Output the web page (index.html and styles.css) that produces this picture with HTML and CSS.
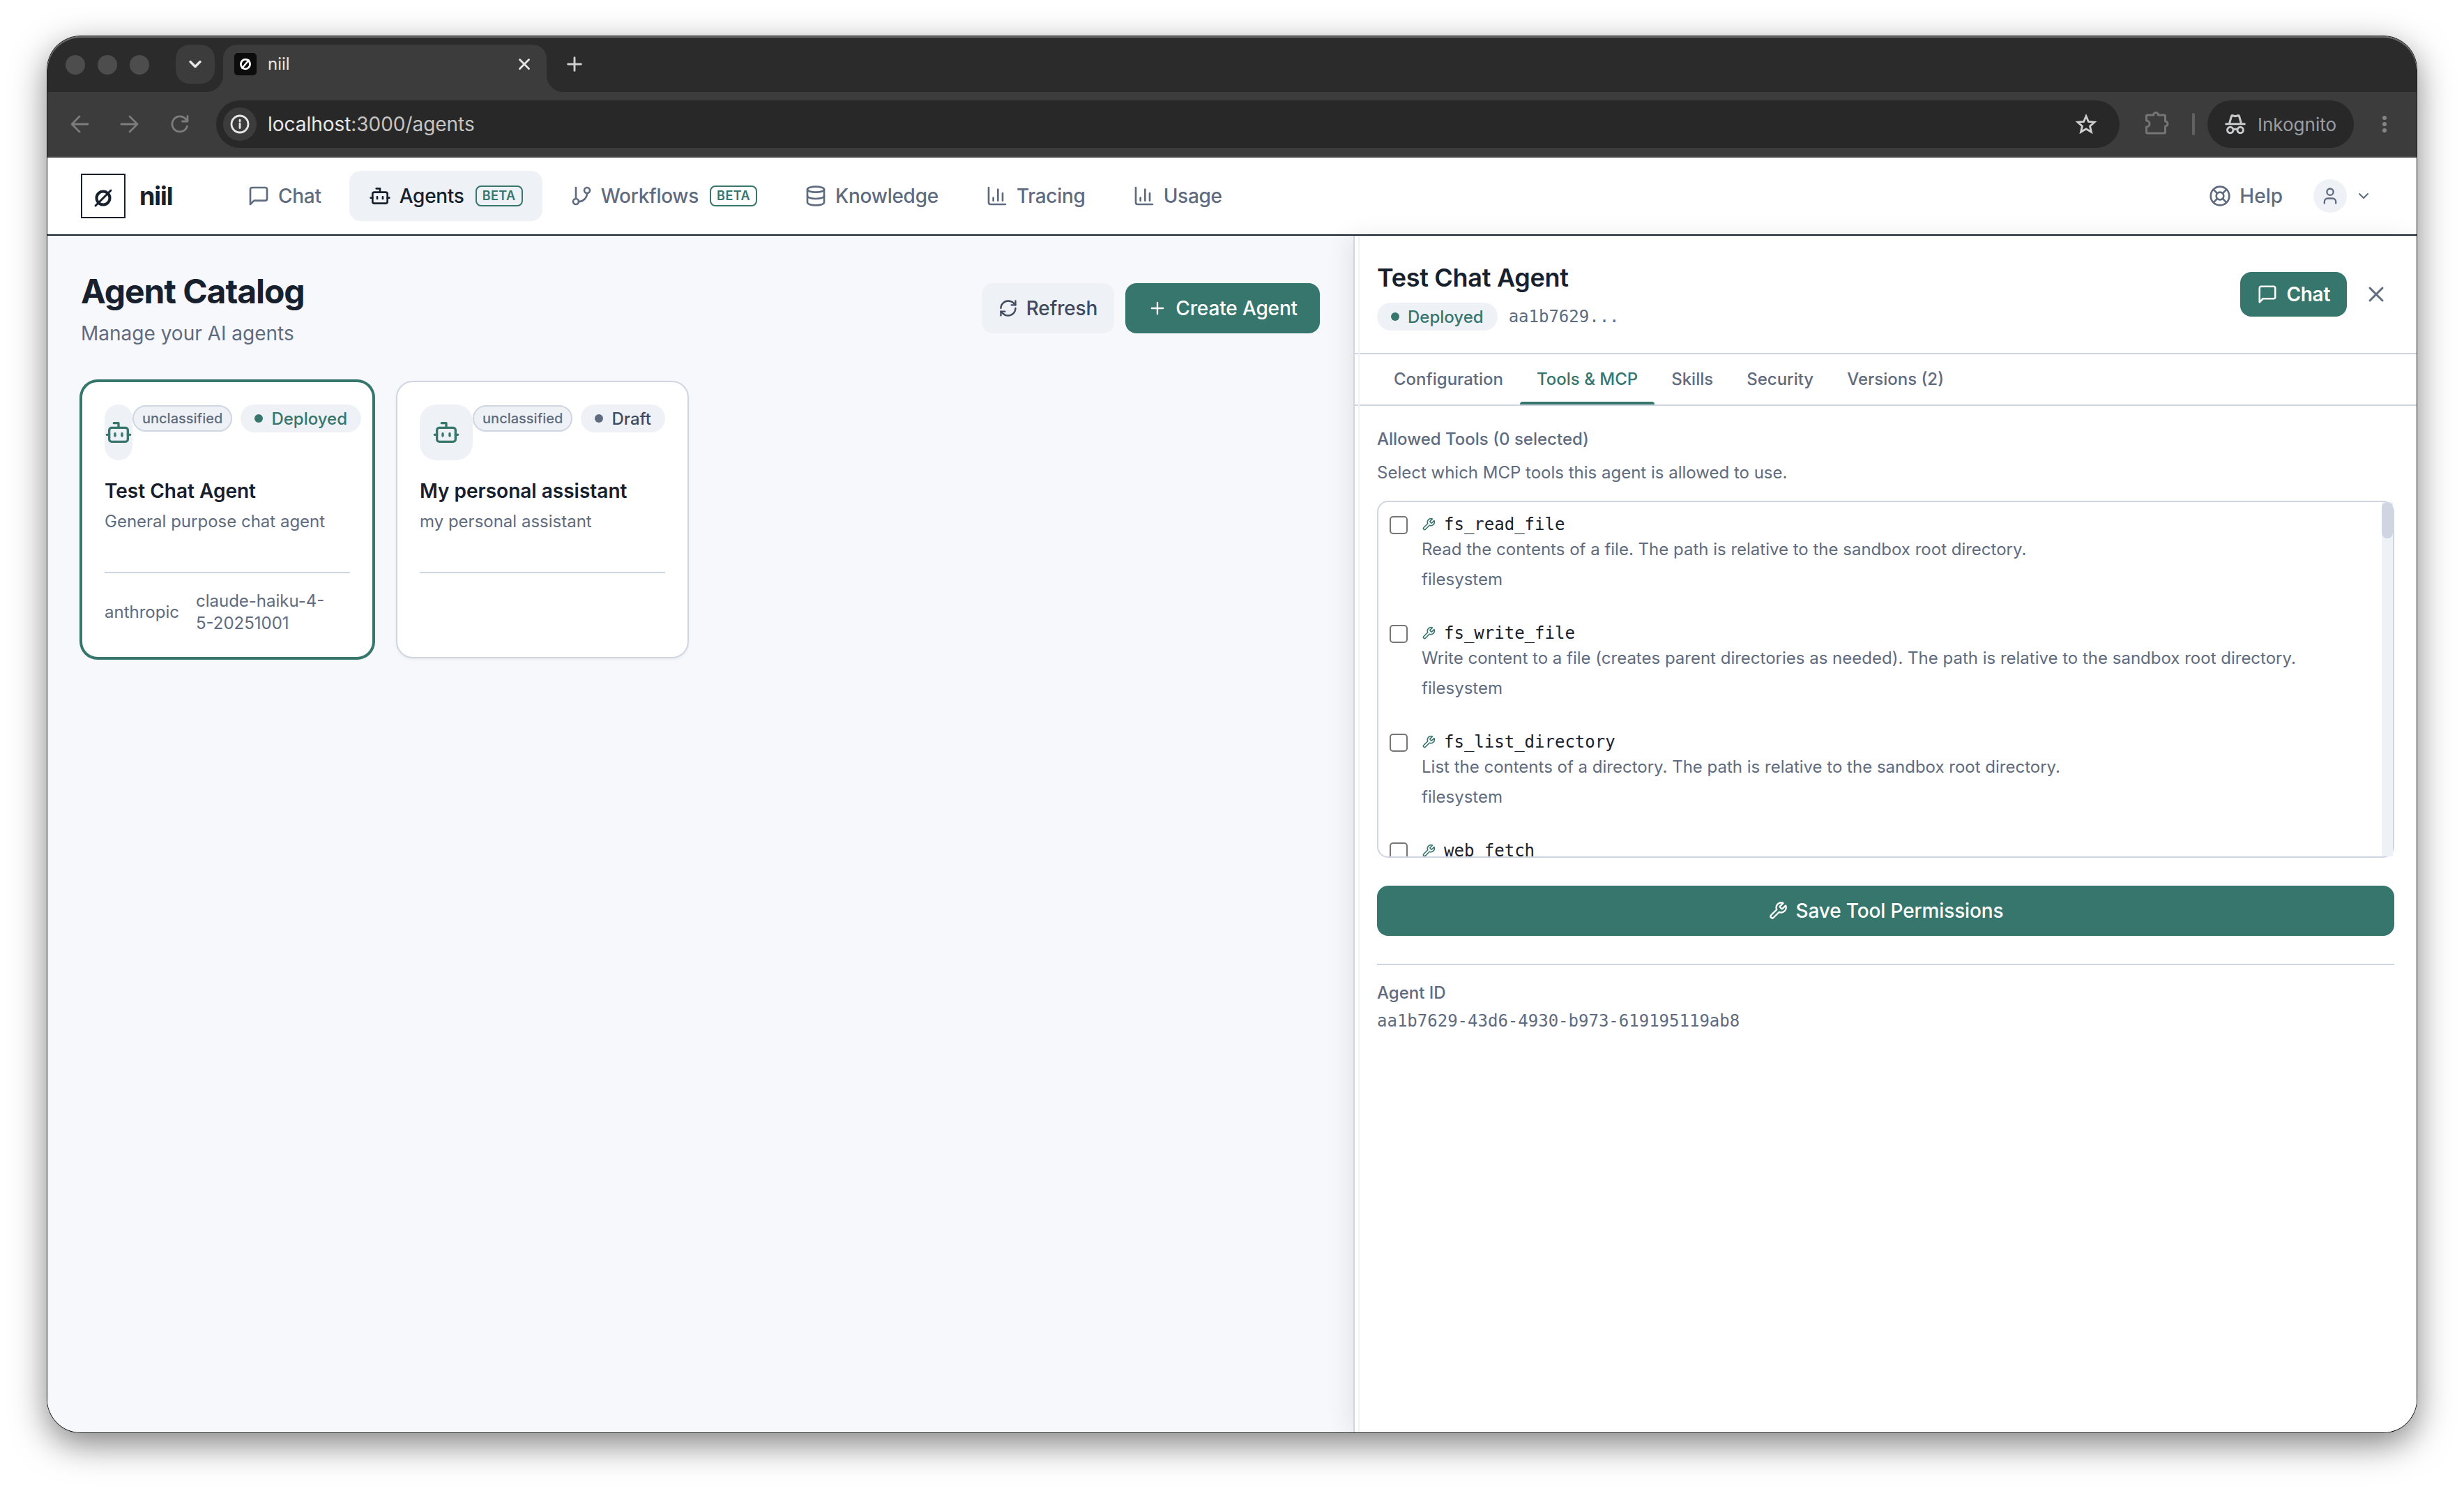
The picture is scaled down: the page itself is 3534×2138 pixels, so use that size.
FILE: index.html
```html
<!DOCTYPE html>
<html lang="en">
<head>
  <meta charset="UTF-8" />
  <meta name="viewport" content="width=device-width, initial-scale=1.0"/>
  <title>niil</title>
  <link rel="stylesheet" href="styles.css">
</head>
<body>
  <!-- shared icons -->
  <svg class="sprite" width="0" height="0">
    <symbol id="i-chat" viewBox="0 0 24 24"><path d="M21 15a2 2 0 0 1-2 2H7l-4 4V5a2 2 0 0 1 2-2h14a2 2 0 0 1 2 2z"/></symbol>
    <symbol id="i-bot" viewBox="0 0 24 24"><path d="M12 8V4H8"/><rect width="16" height="12" x="4" y="8" rx="2"/><path d="M2 14h2M20 14h2M15 13v2M9 13v2"/></symbol>
    <symbol id="i-branch" viewBox="0 0 24 24"><path d="M6 3v12"/><circle cx="18" cy="6" r="3"/><circle cx="6" cy="18" r="3"/><path d="M18 9a9 9 0 0 1-9 9"/></symbol>
    <symbol id="i-db" viewBox="0 0 24 24"><ellipse cx="12" cy="5" rx="9" ry="3"/><path d="M3 5v14a9 3 0 0 0 18 0V5"/><path d="M3 12a9 3 0 0 0 18 0"/></symbol>
    <symbol id="i-chart" viewBox="0 0 24 24"><path d="M3 3v16a2 2 0 0 0 2 2h16M18 17V9M13 17V5M8 17v-3"/></symbol>
    <symbol id="i-help" viewBox="0 0 24 24"><circle cx="12" cy="12" r="10"/><path d="m4.93 4.93 4.24 4.24M14.83 9.17l4.24-4.24M14.83 14.83l4.24 4.24M9.17 14.83l-4.24 4.24"/><circle cx="12" cy="12" r="4"/></symbol>
    <symbol id="i-user" viewBox="0 0 24 24"><path d="M19 21v-2a4 4 0 0 0-4-4H9a4 4 0 0 0-4 4v2"/><circle cx="12" cy="7" r="4"/></symbol>
    <symbol id="i-down" viewBox="0 0 24 24"><path d="m6 9 6 6 6-6"/></symbol>
    <symbol id="i-refresh" viewBox="0 0 24 24"><path d="M3 12a9 9 0 0 1 9-9 9.75 9.75 0 0 1 6.74 2.74L21 8"/><path d="M21 3v5h-5"/><path d="M21 12a9 9 0 0 1-9 9 9.75 9.75 0 0 1-6.74-2.74L3 16"/><path d="M8 16H3v5"/></symbol>
    <symbol id="i-plus" viewBox="0 0 24 24"><path d="M5 12h14M12 5v14"/></symbol>
    <symbol id="i-x" viewBox="0 0 24 24"><path d="M18 6 6 18M6 6l12 12"/></symbol>
    <symbol id="i-wrench" viewBox="0 0 24 24"><path d="M14.7 6.3a1 1 0 0 0 0 1.4l1.6 1.6a1 1 0 0 0 1.4 0l3.77-3.77a6 6 0 0 1-7.94 7.94l-6.91 6.91a2.12 2.12 0 0 1-3-3l6.91-6.91a6 6 0 0 1 7.94-7.94l-3.76 3.76z"/></symbol>
  </svg>

  <div class="window">
    <div class="tabstrip">
      <div class="lights"><i></i><i></i><i></i></div>
      <div class="tab-search"><svg class="icon" width="28" height="28" stroke-width="3"><use href="#i-down"/></svg></div>
      <div class="browser-tab">
        <svg class="favicon" width="32" height="32" viewBox="0 0 32 32"><rect width="32" height="32" rx="5" fill="#0c0c0c"/><ellipse cx="16" cy="16" rx="6.6" ry="6.8" fill="none" stroke="#fff" stroke-width="2.8"/><path d="M10.5 22.5 21.5 9.5" stroke="#fff" stroke-width="2.4"/></svg>
        <span class="tab-title">niil</span>
        <svg class="icon" width="26" height="26" stroke-width="2.6"><use href="#i-x"/></svg>
      </div>
      <svg class="icon new-tab" width="32" height="32" stroke-width="2.2"><use href="#i-plus"/></svg>
    </div>

    <div class="toolbar">
      <svg class="icon nav-ic" width="32" height="32" viewBox="0 0 32 32" stroke-width="2.8"><path d="M28 16H5.5M16 5 5 16l11 11"/></svg>
      <svg class="icon nav-ic" width="32" height="32" viewBox="0 0 32 32" stroke-width="2.8"><path d="M4 16h22.5M16 5l11 11-11 11"/></svg>
      <svg class="icon nav-ic" width="32" height="32" viewBox="0 0 32 32" stroke-width="2.8"><path d="M26.5 19A11 11 0 1 1 24 8.3l3 3M27 4.5v7.5h-7.5"/></svg>
      <div class="omnibox">
        <span class="site-info"><svg class="icon" width="28" height="28" viewBox="0 0 28 28" stroke-width="2.8"><circle cx="14" cy="14" r="12"/><path d="M14 13v6.5M14 8.2v1.6"/></svg></span>
        <span class="url">localhost<span class="url-rest">:3000/agents</span></span>
        <svg class="icon star" width="32" height="32" viewBox="0 0 32 32" stroke-width="2.8"><path stroke-linejoin="miter" d="m16 4.5 3.4 8 8.6.7-6.5 5.7 2 8.4-7.5-4.5-7.5 4.5 2-8.4-6.5-5.7 8.6-.7z"/></svg>
      </div>
      <svg class="icon puzzle" width="36" height="36" viewBox="0 0 36 36" stroke-width="3"><path d="M5 7h8.5a3.5 3.5 0 0 1 7 0H29a1.5 1.5 0 0 1 1.5 1.5V16a3.5 3.5 0 0 1 0 7v8.5A1.5 1.5 0 0 1 29 33H5a1.5 1.5 0 0 1-1.5-1.5V24a4.5 4.5 0 0 0 0-9V8.5A1.5 1.5 0 0 1 5 7z"/></svg>
      <span class="bar-sep"></span>
      <div class="incognito">
        <svg width="32" height="30" viewBox="0 0 32 30" fill="none" stroke="#c9cacc" stroke-width="3"><path d="M1.5 14.8h29"/><path d="M7.5 14 10.5 3.5c.3-.8 1-1 1.7-.8l3.8 1 3.8-1c.7-.2 1.4 0 1.7.8L24.5 14"/><circle cx="8.8" cy="23.5" r="4.2"/><circle cx="23.2" cy="23.5" r="4.2"/><path d="M13 23c2-1.3 4-1.3 6 0"/></svg>
        <span>Inkognito</span>
      </div>
      <div class="kebab"><i></i><i></i><i></i></div>
    </div>

    <header class="app-header">
      <div class="logo"><svg width="32" height="32" viewBox="0 0 32 32" fill="none" stroke="#17202d"><circle cx="16" cy="16" r="9.5" stroke-width="4"/><path d="M5 27 27 5" stroke-width="3" stroke-linecap="round"/></svg></div>
      <div class="brand">niil</div>
      <nav class="main-nav">
        <a class="nav-link"><svg class="icon" width="32" height="32"><use href="#i-chat"/></svg>Chat</a>
        <a class="nav-link active"><svg class="icon" width="32" height="32"><use href="#i-bot"/></svg>Agents<span class="beta">BETA</span></a>
        <a class="nav-link"><svg class="icon" width="32" height="32"><use href="#i-branch"/></svg>Workflows<span class="beta">BETA</span></a>
        <a class="nav-link"><svg class="icon" width="32" height="32"><use href="#i-db"/></svg>Knowledge</a>
        <a class="nav-link"><svg class="icon" width="32" height="32"><use href="#i-chart"/></svg>Tracing</a>
        <a class="nav-link"><svg class="icon" width="32" height="32"><use href="#i-chart"/></svg>Usage</a>
      </nav>
      <a class="help"><svg class="icon" width="32" height="32"><use href="#i-help"/></svg>Help</a>
      <div class="user-menu">
        <span class="avatar"><svg class="icon" width="28" height="28"><use href="#i-user"/></svg></span>
        <svg class="icon" width="24" height="24"><use href="#i-down"/></svg>
      </div>
    </header>

    <div class="workspace">
      <main class="catalog">
        <div class="catalog-head">
          <div>
            <h1>Agent Catalog</h1>
            <p>Manage your AI agents</p>
          </div>
          <div class="actions">
            <button class="btn btn-soft"><svg class="icon" width="28" height="28"><use href="#i-refresh"/></svg>Refresh</button>
            <button class="btn btn-primary"><svg class="icon" width="28" height="28"><use href="#i-plus"/></svg>Create Agent</button>
          </div>
        </div>
        <div class="cards">
          <div class="card selected">
            <div class="card-top">
              <div class="card-icon"><svg class="icon" width="40" height="40"><use href="#i-bot"/></svg></div>
              <div class="badges"><span class="tag">unclassified</span><span class="status deployed">Deployed</span></div>
            </div>
            <h3>Test Chat Agent</h3>
            <p class="card-desc">General purpose chat agent</p>
            <div class="card-foot"><span>anthropic</span><span>claude-haiku-4-<br>5-20251001</span></div>
          </div>
          <div class="card">
            <div class="card-top">
              <div class="card-icon"><svg class="icon" width="40" height="40"><use href="#i-bot"/></svg></div>
              <div class="badges"><span class="tag">unclassified</span><span class="status">Draft</span></div>
            </div>
            <h3>My personal assistant</h3>
            <p class="card-desc">my personal assistant</p>
            <div class="card-foot"></div>
          </div>
        </div>
      </main>

      <aside class="panel">
        <div class="panel-head">
          <div class="panel-title">
            <h2>Test Chat Agent</h2>
            <div class="panel-meta"><span class="status deployed">Deployed</span><code>aa1b7629...</code></div>
          </div>
          <button class="btn btn-primary btn-chat"><svg class="icon" width="30" height="30"><use href="#i-chat"/></svg>Chat</button>
          <button class="close"><svg class="icon" width="36" height="36"><use href="#i-x"/></svg></button>
        </div>
        <div class="panel-tabs">
          <span class="ptab">Configuration</span>
          <span class="ptab active">Tools &amp; MCP</span>
          <span class="ptab">Skills</span>
          <span class="ptab">Security</span>
          <span class="ptab">Versions (2)</span>
        </div>
        <div class="panel-body">
          <div class="label">Allowed Tools (0 selected)</div>
          <p class="hint">Select which MCP tools this agent is allowed to use.</p>
          <div class="tool-box">
            <div class="tool-list">
              <div class="tool">
                <span class="check"></span>
                <div>
                  <div class="tool-name"><svg class="icon" width="20" height="20"><use href="#i-wrench"/></svg>fs_read_file</div>
                  <div class="tool-desc">Read the contents of a file. The path is relative to the sandbox root directory.</div>
                  <div class="tool-src">filesystem</div>
                </div>
              </div>
              <div class="tool">
                <span class="check"></span>
                <div>
                  <div class="tool-name"><svg class="icon" width="20" height="20"><use href="#i-wrench"/></svg>fs_write_file</div>
                  <div class="tool-desc">Write content to a file (creates parent directories as needed). The path is relative to the sandbox root directory.</div>
                  <div class="tool-src">filesystem</div>
                </div>
              </div>
              <div class="tool">
                <span class="check"></span>
                <div>
                  <div class="tool-name"><svg class="icon" width="20" height="20"><use href="#i-wrench"/></svg>fs_list_directory</div>
                  <div class="tool-desc">List the contents of a directory. The path is relative to the sandbox root directory.</div>
                  <div class="tool-src">filesystem</div>
                </div>
              </div>
              <div class="tool">
                <span class="check"></span>
                <div>
                  <div class="tool-name"><svg class="icon" width="20" height="20"><use href="#i-wrench"/></svg>web_fetch</div>
                </div>
              </div>
            </div>
            <div class="scroll-track"><div class="scroll-thumb"></div></div>
          </div>
          <button class="btn btn-primary btn-save"><svg class="icon" width="28" height="28"><use href="#i-wrench"/></svg>Save Tool Permissions</button>
          <div class="agent-id">
            <div class="label">Agent ID</div>
            <code>aa1b7629-43d6-4930-b973-619195119ab8</code>
          </div>
        </div>
      </aside>
    </div>
  </div>
</body>
</html>
```

FILE: styles.css
```css
:root {
  --accent: #36766d;
  --ink: #17202d;
  --text: #3f4a5e;
  --muted: #5f6b7e;
  --border: #cfd6e2;
  --soft: #eef2f7;
  --bg: #f7f8fc;
  --mono: 'DejaVu Sans Mono', 'Liberation Mono', monospace;
}
* { box-sizing: border-box; }
body {
  margin: 0;
  padding: 52px 68px 84px;
  height: 2138px;
  background: #fff;
  color: var(--ink);
  font-family: Inter, 'Liberation Sans', sans-serif;
  font-size: 28px;
  overflow: hidden;
}
h1, h2, h3, p { margin: 0; }
button { font-family: inherit; border: none; background: none; cursor: pointer; }
code { font-family: var(--mono); font-size: 24px; color: var(--muted); }
.sprite { position: absolute; }
.icon {
  flex: none;
  fill: none;
  stroke: currentColor;
  stroke-linecap: round;
  stroke-linejoin: round;
}
.icon:not([stroke-width]) { stroke-width: 2; }

.window {
  display: flex;
  flex-direction: column;
  height: 2002px;
  border-radius: 48px;
  background: #fff;
  overflow: hidden;
  box-shadow: 0 0 0 1px #1c1c1c, 0 16px 50px rgba(0,0,0,0.5);
}

/* browser chrome */
.tabstrip {
  display: flex;
  align-items: center;
  height: 80px;
  background: #2b2b2b;
  border-radius: 48px 48px 0 0;
  box-shadow: inset 0 2px 0 #6a6a6a;
}
.lights { display: flex; gap: 18px; margin-left: 26px; padding-top: 2px; }
.lights i { width: 28px; height: 28px; border-radius: 50%; background: #4d4d4d; }
.tab-search {
  display: grid;
  place-items: center;
  width: 56px;
  height: 56px;
  margin-left: 38px;
  border-radius: 20px;
  background: #3c3c3c;
  color: #e6e6e6;
}
.browser-tab {
  position: relative;
  display: flex;
  align-items: center;
  align-self: flex-end;
  width: 464px;
  height: 68px;
  margin-left: 12px;
  padding: 0 19px 12px 16px;
  border-radius: 20px 20px 0 0;
  background: #3c3c3c;
  color: #e6e6e6;
}
.browser-tab::before, .browser-tab::after {
  content: "";
  position: absolute;
  bottom: 0;
  width: 24px;
  height: 24px;
}
.browser-tab::before { left: -24px; background: radial-gradient(circle at 0 0, transparent 23.5px, #3c3c3c 24.5px); }
.browser-tab::after { right: -24px; background: radial-gradient(circle at 100% 0, transparent 23.5px, #3c3c3c 24.5px); }
.tab-title { flex: 1; margin-left: 16px; font-size: 24px; line-height: 28px; padding-bottom: 1px; }
.new-tab { margin-left: 24px; color: #d0d0d0; }
.toolbar {
  display: flex;
  align-items: center;
  height: 94px;
  padding: 0 43px 0 30px;
  background: #3c3c3c;
  border-bottom: 2px solid #484848;
}
.nav-ic { margin-right: 40px; color: #7c7c7c; }
.nav-ic:nth-child(3) { margin-right: 36px; }
.omnibox {
  display: flex;
  align-items: center;
  flex: 1;
  height: 68px;
  padding: 0 32px 0 10px;
  border-radius: 34px;
  background: #282828;
}
.site-info {
  display: grid;
  place-items: center;
  width: 48px;
  height: 48px;
  margin-right: 16px;
  border-radius: 50%;
  background: #3c3c3c;
  color: #e6e6e6;
}
.url { flex: 1; font-size: 28px; letter-spacing: -0.04px; color: #e8e8e8; }
.url-rest { color: #c4c4c4; }
.star { color: #cfcfcf; }
.puzzle { margin: 0 0 4px 35px; color: #757575; }
.bar-sep { width: 4px; height: 32px; margin-left: 33px; border-radius: 2px; background: #616161; }
.incognito {
  display: flex;
  align-items: center;
  gap: 16px;
  width: 210px;
  height: 68px;
  margin-left: 18px;
  padding-left: 24px;
  border-radius: 34px;
  background: #282828;
  color: #9a9da3;
  font-size: 26px;
}
.kebab { display: grid; gap: 3px; margin-left: 41px; }
.kebab i { width: 6px; height: 6px; border-radius: 50%; background: #858585; }

/* app header */
.app-header {
  display: flex;
  align-items: center;
  height: 112px;
  padding: 0 64px 0 48px;
  border-bottom: 2px solid var(--ink);
}
.logo {
  display: grid;
  place-items: center;
  width: 64px;
  height: 64px;
  padding-top: 6px;
  border: 2px solid var(--ink);
}
.brand { width: 127px; margin-left: 20px; font-size: 36px; font-weight: 700; letter-spacing: -0.03em; }
.main-nav { display: flex; gap: 12px; flex: 1; }
.nav-link, .help {
  display: flex;
  align-items: center;
  gap: 12px;
  color: var(--muted);
  font-weight: 500;
}
.nav-link { height: 72px; padding: 0 28px; border-radius: 16px; letter-spacing: -0.01em; }
.nav-link.active { background: var(--soft); color: var(--ink); }
.beta {
  height: 30px;
  margin-left: 4px;
  padding: 0 8px;
  border: 2px solid var(--accent);
  border-radius: 8px;
  color: var(--accent);
  font-size: 18px;
  font-weight: 600;
  line-height: 26px;
  letter-spacing: 0.025em;
}
.user-menu { display: flex; align-items: center; gap: 12px; margin-left: 44px; color: var(--muted); }
.avatar { display: grid; place-items: center; width: 48px; height: 48px; border-radius: 50%; background: var(--soft); }

.workspace { display: flex; flex: 1; }

/* catalog */
.catalog { width: 1873px; padding: 48px; background: var(--bg); }
.catalog-head { display: flex; justify-content: space-between; align-items: center; margin-bottom: 48px; }
h1 { font-size: 48px; line-height: 64px; font-weight: 700; letter-spacing: -0.022em; }
.catalog-head p { margin-top: 8px; line-height: 40px; color: var(--muted); }
.actions { display: flex; gap: 16px; }
.btn {
  display: flex;
  align-items: center;
  justify-content: center;
  gap: 12px;
  height: 72px;
  padding: 0 32px;
  border-radius: 16px;
  font-size: 28px;
  font-weight: 500;
  letter-spacing: -0.005em;
}
.btn-primary { background: var(--accent); color: #fff; }
.btn-soft { padding: 0 24px; background: var(--soft); color: var(--text); }
.cards { display: grid; grid-template-columns: repeat(2, 420px); gap: 32px; }
.card {
  display: flex;
  flex-direction: column;
  height: 398px;
  padding: 32px;
  border: 2px solid var(--border);
  border-radius: 24px;
  background: #fff;
  box-shadow: 0 2px 4px rgba(0,0,0,0.05);
}
.card.selected { border-color: var(--accent); box-shadow: 0 0 0 2px var(--accent); }
.card-top { display: flex; justify-content: space-between; height: 80px; }
.card-icon {
  display: flex;
  align-items: center;
  justify-content: center;
  width: 80px;
  height: 80px;
  border-radius: 24px;
  background: var(--soft);
  color: var(--accent);
}
.badges { display: flex; align-items: center; gap: 12px; height: 40px; }
.tag {
  padding: 0 12px;
  border: 2px solid var(--border);
  border-radius: 19px;
  background: var(--soft);
  color: var(--muted);
  font-size: 20px;
  font-weight: 500;
  line-height: 34px;
}
.status {
  display: flex;
  align-items: center;
  gap: 12px;
  height: 40px;
  padding: 0 20px;
  border-radius: 20px;
  background: var(--soft);
  color: var(--text);
  font-size: 24px;
  font-weight: 500;
}
.status::before { content: ""; width: 12px; height: 12px; border-radius: 50%; background: var(--muted); }
.status.deployed { color: var(--accent); }
.status.deployed::before { background: var(--accent); }
h3 { margin-top: 24px; font-size: 28px; line-height: 40px; font-weight: 600; }
.card-desc { margin-top: 4px; font-size: 24px; line-height: 39px; color: var(--muted); }
.card-foot {
  display: flex;
  align-items: center;
  gap: 24px;
  height: 90px;
  margin-top: auto;
  padding-top: 24px;
  border-top: 2px solid var(--border);
  color: var(--muted);
  font-size: 24px;
  line-height: 32px;
}

/* detail panel */
.panel {
  position: relative;
  flex: 1;
  border-left: 2px solid var(--border);
  background: #fff;
  box-shadow: -8px 0 32px rgba(0,0,0,0.08);
}
/* resize handle */
.panel::before {
  content: "";
  position: absolute;
  top: 0;
  bottom: 0;
  left: 5px;
  width: 2px;
  background: var(--soft);
}
.panel-head {
  display: flex;
  align-items: center;
  height: 170px;
  padding: 0 32px;
  border-bottom: 2px solid var(--border);
}
.panel-title { flex: 1; }
h2 { font-size: 36px; line-height: 56px; font-weight: 600; letter-spacing: -0.008em; }
.panel-meta { display: flex; align-items: center; gap: 16px; margin-top: 8px; }
.btn-chat { height: 64px; padding: 0 24px; font-weight: 600; letter-spacing: -0.01em; }
.close { display: grid; place-items: center; width: 52px; height: 52px; margin-left: 16px; padding: 0; color: var(--muted); }
.panel-tabs { display: flex; height: 74px; padding: 0 32px; border-bottom: 2px solid var(--border); }
.ptab {
  position: relative;
  padding: 0 24px;
  color: var(--muted);
  font-size: 24px;
  font-weight: 500;
  line-height: 71px;
}
.ptab.active { color: var(--accent); }
.ptab.active::after {
  content: "";
  position: absolute;
  left: 0;
  right: 0;
  bottom: 0;
  height: 4px;
  border-radius: 4px 4px 0 0;
  background: var(--accent);
}
.panel-body { padding: 32px; }
.label { color: var(--muted); font-size: 24px; font-weight: 500; line-height: 32px; }
.hint { margin: 16px 0 24px; color: var(--muted); font-size: 24px; line-height: 32px; }
.tool-box {
  display: flex;
  height: 512px;
  border: 2px solid var(--border);
  border-radius: 16px;
}
.tool-list { flex: 1; overflow: hidden; }
.tool { display: flex; height: 156px; padding: 16px; }
.check {
  flex: none;
  width: 26px;
  height: 26px;
  margin: 4px 20px 0 0;
  border: 2px solid #767676;
  border-radius: 5px;
  background: #fff;
}
.tool-name { display: flex; align-items: center; gap: 12px; height: 32px; font-family: var(--mono); font-size: 24px; }
.tool-name .icon { color: var(--accent); }
.tool-desc { color: var(--muted); font-size: 24px; line-height: 40px; }
.tool-src { margin-top: 5px; color: var(--muted); font-size: 24px; line-height: 36px; }
.scroll-track { width: 16px; background: var(--soft); }
.scroll-thumb { height: 52px; border-radius: 8px; background: var(--border); }
.btn-save { width: 100%; margin: 40px 0; }
.agent-id { padding-top: 24px; border-top: 2px solid var(--border); }
.agent-id code { display: block; margin-top: 8px; line-height: 32px; }
```
